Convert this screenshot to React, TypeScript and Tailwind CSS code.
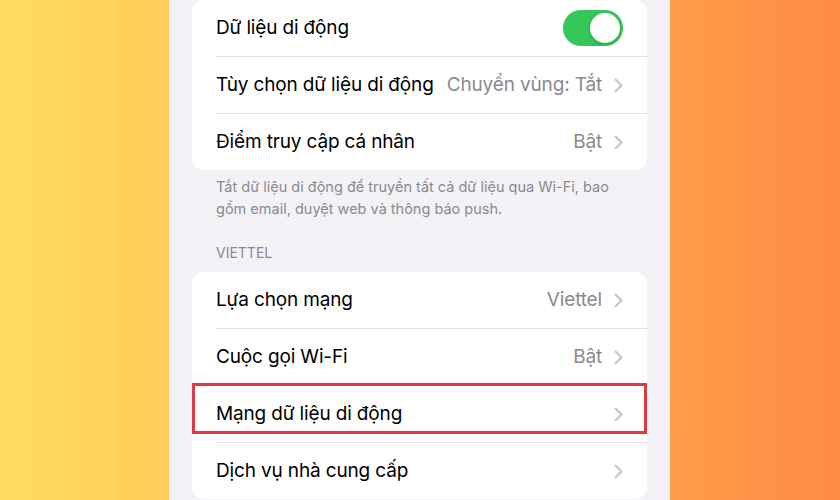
const font = { fontFamily: "Inter, 'Noto Sans', sans-serif" };

function Chevron() {
  return (
    <svg width="9" height="15" viewBox="0 0 9 15" className="ml-3 shrink-0">
      <path d="M1.5 1.5 L7.5 7.5 L1.5 13.5" fill="none" stroke="#C4C4C7" strokeWidth="2" strokeLinecap="round" strokeLinejoin="round" />
    </svg>
  );
}

function Toggle() {
  return (
    <div className="w-[60px] h-[36px] rounded-full bg-[#34C759] p-[3px] flex justify-end">
      <div className="w-[30px] h-[30px] rounded-full bg-white shadow-[0_2px_4px_rgba(0,0,0,0.15)]" />
    </div>
  );
}

type Row = { label: string; value?: string; toggle?: boolean; marked?: boolean };

const top: Row[] = [
  { label: "Dữ liệu di động", toggle: true },
  { label: "Tùy chọn dữ liệu di động", value: "Chuyển vùng: Tắt" },
  { label: "Điểm truy cập cá nhân", value: "Bật" },
];

const viettel: Row[] = [
  { label: "Lựa chọn mạng", value: "Viettel" },
  { label: "Cuộc gọi Wi-Fi", value: "Bật" },
  { label: "Mạng dữ liệu di động", marked: true },
  { label: "Dịch vụ nhà cung cấp" },
];

function Card({ rows }: { rows: Row[] }) {
  return (
    <div className="bg-white rounded-[12px] mx-[23px]">
      {rows.map((r, i) => (
        <div key={r.label} className="relative pl-[24px]">
          {i > 0 && <div className="h-px bg-[#E3E3E6]" />}
          <div className="h-[56px] flex items-center pr-[24px]">
            <span className="text-[19px] text-black tracking-[-0.15px] flex-1 whitespace-nowrap">{r.label}</span>
            {r.value && <span className="text-[19px] text-[#8A8A8E] tracking-[-0.15px] whitespace-nowrap">{r.value}</span>}
            {r.toggle ? <Toggle /> : <Chevron />}
          </div>
          {r.marked && (
            <div className="absolute left-0 right-0 top-[-2px] h-[51px] border-[3px] border-[#DB3B42]" />
          )}
        </div>
      ))}
    </div>
  );
}

export default function App() {
  return (
    <div className="w-[840px] h-[500px] overflow-hidden bg-gradient-to-r from-[#FFDC5E] to-[#FF8B45]" style={font}>
      <div className="ml-[169px] w-[501px] h-full bg-[#F2F2F7]">
        <Card rows={top} />
        <p className="px-[47px] pt-[6px] text-[14.5px] leading-[22px] text-[#8A8A8E]">
          Tắt dữ liệu di động để truyền tất cả dữ liệu qua Wi-Fi, bao gồm email, duyệt web và thông báo push.
        </p>
        <div className="px-[47px] pt-[23px] pb-[9px] text-[14px] leading-[20px] text-[#8A8A8E]">VIETTEL</div>
        <Card rows={viettel} />
      </div>
    </div>
  );
}
